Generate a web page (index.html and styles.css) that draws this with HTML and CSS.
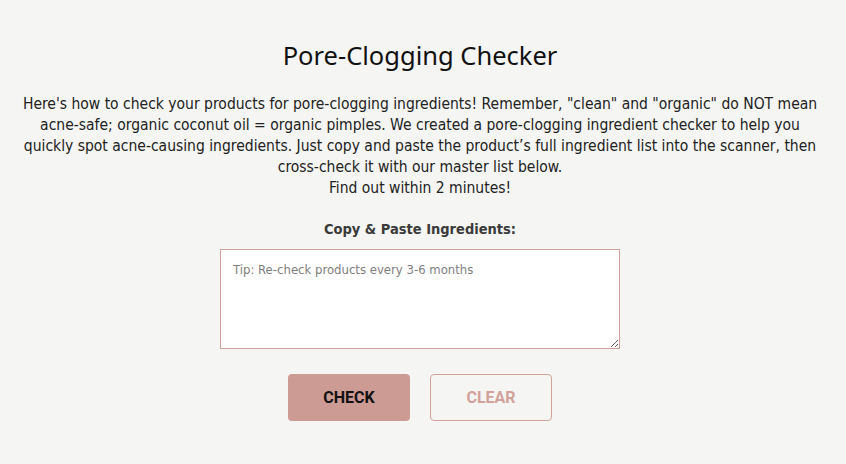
FILE: index.html
```html
<!DOCTYPE html>
<html lang="en">
<head>
<meta charset="UTF-8">
<meta name="viewport" content="width=device-width, initial-scale=1.0">
<title>Pore-Clogging Checker</title>
<link rel="stylesheet" href="styles.css">
</head>
<body>

<div class="checker">
  <h2 class="checker-title">Pore-Clogging Checker</h2>

  <p class="checker-intro">
    Here's how to check your products for pore-clogging ingredients! Remember, "clean" and "organic" do NOT mean acne-safe; organic coconut oil = organic pimples. We created a pore-clogging ingredient checker to help you quickly spot acne-causing ingredients. Just copy and paste the product’s full ingredient list into the scanner, then cross-check it with our master list below.<br>
    Find out within 2 minutes!
  </p>

  <!-- Форма проверки ингредиентов -->
  <form class="checker-form" id="checkerForm">
    <label class="checker-label" for="ingredients">Copy &amp; Paste Ingredients:</label>
    <textarea class="checker-input" id="ingredients" placeholder="Tip: Re-check products every 3-6 months"></textarea>
    <div class="checker-buttons">
      <button type="submit" class="btn btn-check">CHECK</button>
      <button type="button" class="btn btn-clear">CLEAR</button>
    </div>
  </form>
</div>

</body>
</html>
```

FILE: styles.css
```css
body {
    margin: 0;
    background-color: #f5f5f3;
    font-family: "DejaVu Sans Condensed", "DejaVu Sans", sans-serif;
    color: #222;
}
.checker {
    padding: 38px 23px 0 17px;
    text-align: center;
}
.checker-title {
    margin: 0 0 22px;
    font-family: "Noto Sans", sans-serif;
    font-weight: 400;
    font-size: 25.5px;
    color: #111;
}
.checker-intro {
    margin: 0 auto;
    max-width: 804px;
    font-size: 15.5px;
    line-height: 21px;
}
.checker-form {
    display: flex;
    flex-direction: column;
    align-items: center;
    margin-top: 22px;
}
.checker-label {
    font-weight: bold;
    font-size: 14.5px;
    color: #3a3a3a;
    margin-bottom: 12px;
}
.checker-input {
    box-sizing: border-box;
    width: 400px;
    height: 100px;
    padding: 12px 12px;
    border: 1px solid #d2a199;
    background: #fff;
    font-family: inherit;
    font-size: 13px;
}
.checker-input::placeholder {
    color: #808080;
}
.checker-buttons {
    display: flex;
    gap: 20px;
    margin-top: 25px;
}
.btn {
    box-sizing: border-box;
    width: 122px;
    height: 47px;
    border-radius: 4px;
    font-family: "Roboto", sans-serif;
    font-weight: bold;
    font-size: 16px;
    cursor: pointer;
}
.btn-check {
    background-color: #cc9b94;
    border: none;
    color: #111;
}
.btn-clear {
    background-color: transparent;
    border: 1px solid #d2a199;
    color: #d2a199;
}
```
